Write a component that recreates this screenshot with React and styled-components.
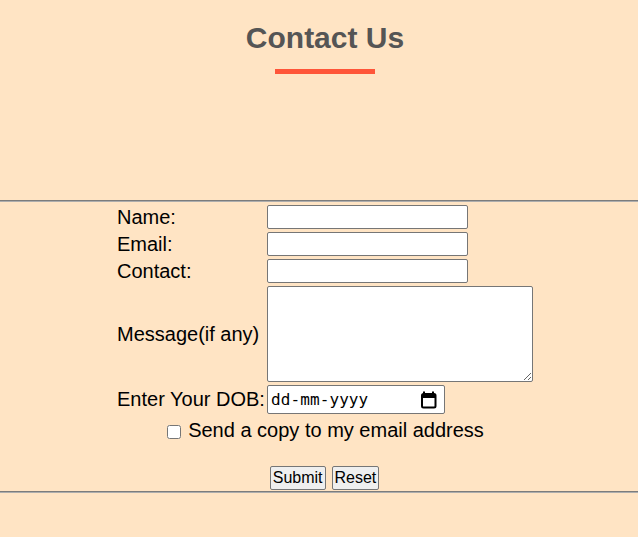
import React from 'react';
import styled, { createGlobalStyle } from 'styled-components';

const GlobalStyle = createGlobalStyle`
    html, body {
        margin: 0;
        padding: 0;
        background-color: #ffe4c4;
        font-family: "Liberation Sans", Arial, sans-serif;
        color: #000;
    }
`;

const Page = styled.div`
    min-height: 537px;
`;

const Header = styled.header`
    height: 200px;
    box-sizing: border-box;
    padding: 21px 0 0 12px;
    display: flex;
    flex-direction: column;
    align-items: center;
`;

const Title = styled.h1`
    margin: 0;
    font-size: 30px;
    font-weight: 700;
    color: #555555;
`;

const Underline = styled.div`
    width: 100px;
    height: 5px;
    margin-top: 14px;
    background-color: #ff5539;
`;

const Rule = styled.hr`
    margin: 0;
    height: 0;
    border: none;
    border-top: 1px solid #7c7c7c;
    border-bottom: 1px solid #adadad;
`;

const Form = styled.form`
    display: flex;
    justify-content: center;
    padding: 3px 0 1px 11px;
`;

const Grid = styled.div`
    display: grid;
    grid-template-columns: 151px 266px;
    row-gap: 3px;
    align-items: center;
`;

const Label = styled.label`
    padding-left: 1px;
    font-size: 20px;
    line-height: 23px;
    white-space: nowrap;
`;

const Field = styled.div`
    display: flex;
`;

const TextInput = styled.input`
    box-sizing: border-box;
    width: 201px;
    height: 24px;
    margin: 0;
    border: 1px solid #767676;
    border-radius: 2px;
    background: #fff;
    font-size: 14px;
    font-family: "Liberation Sans", Arial, sans-serif;
`;

const TextArea = styled.textarea`
    box-sizing: border-box;
    width: 266px;
    height: 96px;
    margin: 0;
    border: 1px solid #767676;
    border-radius: 2px;
    background: #fff;
    font-family: "Liberation Mono", monospace;
    font-size: 13px;
`;

const DateBox = styled.div`
    box-sizing: border-box;
    width: 178px;
    height: 29px;
    display: flex;
    align-items: center;
    justify-content: space-between;
    padding: 0 7px 0 3px;
    border: 1px solid #767676;
    border-radius: 2px;
    background: #fff;
    font-family: "DejaVu Sans Mono", "Liberation Mono", monospace;
    font-size: 16px;
    letter-spacing: 0.1px;
`;

const CheckRow = styled.div`
    grid-column: 1 / -1;
    display: flex;
    justify-content: center;
    align-items: center;
    margin-top: 2px;
    padding-left: 2px;
    font-size: 20px;
    line-height: 23px;
`;

const Check = styled.input`
    width: 14px;
    height: 14px;
    margin: 2px 7px 0 0;
`;

const ButtonRow = styled.div`
    grid-column: 1 / -1;
    display: flex;
    justify-content: center;
    gap: 6px;
    margin-top: 21px;
`;

const Button = styled.button`
    box-sizing: border-box;
    height: 24px;
    padding: 0 2px;
    border: 1px solid #767676;
    border-radius: 2px;
    background-color: #efefef;
    color: #000;
    font-family: "Liberation Sans", Arial, sans-serif;
    font-size: 16px;
`;

const CalendarIcon = () => (
    <svg width="16" height="18" viewBox="0 0 16 18">
        <rect x="2" y="0.5" width="2" height="3.5" fill="#000" />
        <rect x="11" y="0.5" width="2" height="3.5" fill="#000" />
        <rect x="1" y="3" width="13.5" height="13.5" rx="1.5" fill="none" stroke="#000" strokeWidth="2" />
        <rect x="1" y="3" width="13.5" height="4" fill="#000" />
    </svg>
);

export default function App() {
    return (
        <Page>
            <GlobalStyle />
            <Header>
                <Title>Contact Us</Title>
                <Underline />
            </Header>
            <Rule />
            <Form onSubmit={e => e.preventDefault()}>
                <Grid>
                    <Label htmlFor="name">Name:</Label>
                    <Field><TextInput id="name" type="text" /></Field>

                    <Label htmlFor="email">Email:</Label>
                    <Field><TextInput id="email" type="email" /></Field>

                    <Label htmlFor="contact">Contact:</Label>
                    <Field><TextInput id="contact" type="tel" /></Field>

                    <Label htmlFor="message">Message(if any)</Label>
                    <Field><TextArea id="message" /></Field>

                    <Label>Enter Your DOB:</Label>
                    <Field>
                        <DateBox>
                            <span>dd-mm-yyyy</span>
                            <CalendarIcon />
                        </DateBox>
                    </Field>

                    <CheckRow>
                        <Check type="checkbox" id="copy" />
                        <label htmlFor="copy">Send a copy to my email address</label>
                    </CheckRow>

                    <ButtonRow>
                        <Button type="submit">Submit</Button>
                        <Button type="reset">Reset</Button>
                    </ButtonRow>
                </Grid>
            </Form>
            <Rule />
        </Page>
    );
}
